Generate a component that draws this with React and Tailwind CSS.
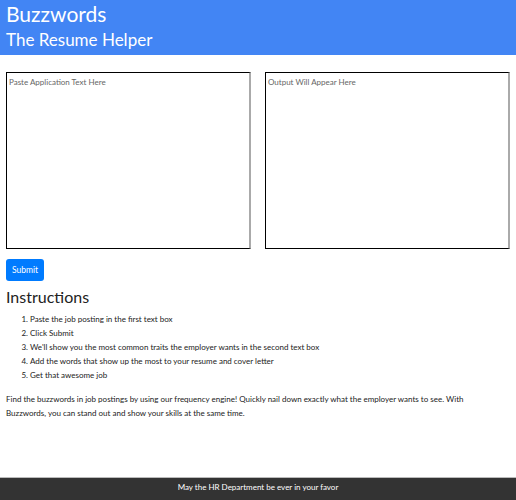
import React from 'react';

const steps = [
  'Paste the job posting in the first text box',
  'Click Submit',
  "We'll show you the most common traits the employer wants in the second text box",
  'Add the words that show up the most to your resume and cover letter',
  'Get that awesome job',
];

export default function App() {
  return (
    <div className="min-h-[500px] flex flex-col bg-white text-[#333]" style={{ fontFamily: 'Lato, sans-serif' }}>
      {/* Header */}
      <header className="h-[55px] bg-[#4285f4] text-white px-[6px]">
        <div className="text-[21px] leading-[28px]">Buzzwords</div>
        <div className="text-[17px] leading-[24px]">The Resume Helper</div>
      </header>

      <main className="px-[6px] pt-[17px]">
        <div className="flex gap-[14px]">
          <textarea
            placeholder="Paste Application Text Here"
            className="w-[245px] h-[177px] border border-black border-r-2 border-r-[#aaa] text-[8px] leading-[12px] px-[2px] pt-[3px] resize-none placeholder:text-[#666] outline-none"
          />
          <textarea
            placeholder="Output Will Appear Here"
            className="w-[245px] h-[177px] border border-black border-r-2 border-r-[#aaa] text-[8px] leading-[12px] px-[2px] pt-[3px] resize-none placeholder:text-[#666] outline-none"
          />
        </div>

        <button className="mt-[10px] h-[22px] w-[38px] rounded-[3px] bg-[#007bff] text-white text-[8.5px]">Submit</button>

        <h2 className="mt-[4px] text-[16px] leading-[24px] text-[#222]">Instructions</h2>
        <ol className="list-decimal pl-[24px] mt-[3px] text-[8px] leading-[14px] text-[#222]">
          {steps.map((s) => (
            <li key={s}>{s}</li>
          ))}
        </ol>

        <p className="mt-[10px] text-[8px] leading-[14px] text-[#222] pr-[40px]">
          Find the buzzwords in job postings by using our frequency engine! Quickly nail down exactly what the employer wants to see. With Buzzwords, you can stand out and show your skills at the same time.
        </p>
      </main>

      <footer className="mt-auto h-[23px] bg-[#333] border-t border-[#bbb] text-white text-[8px] flex items-center justify-center pb-[5px]">
        May the HR Department be ever in your favor
      </footer>
    </div>
  );
}
